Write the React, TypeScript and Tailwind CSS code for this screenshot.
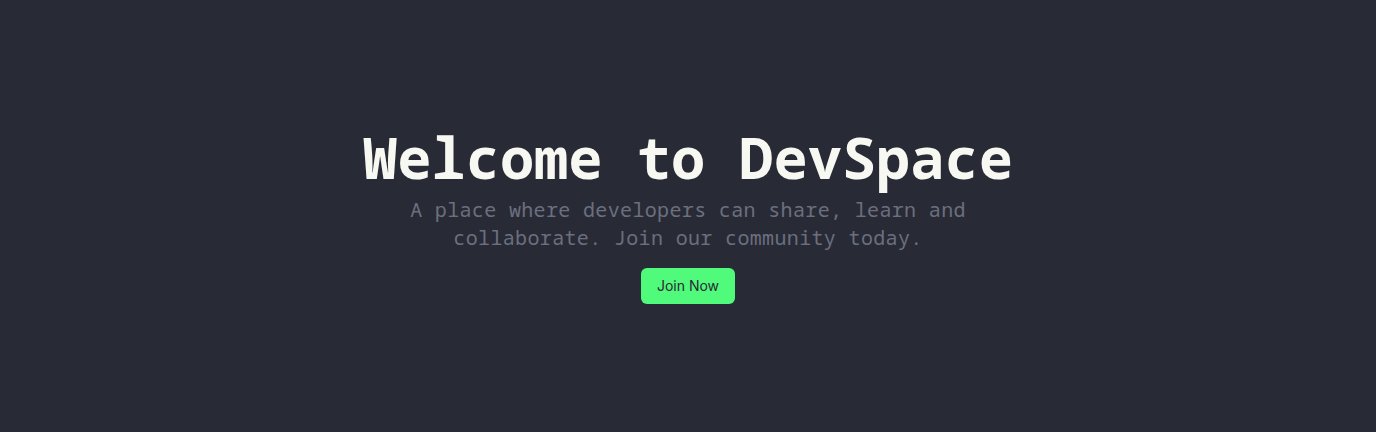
export default function App() {
    return (
        <main className="min-h-screen bg-[#282a36] flex items-center justify-center">
            <div className="flex flex-col items-center text-center">
                {/* Hero */}
                <h1 className="text-[57px] leading-none font-bold text-[#f8f8f2] font-['Noto_Sans_Mono',monospace]">
                    Welcome to DevSpace
                </h1>
                <p className="mt-[10px] max-w-xl text-xl tracking-[0.35px] text-[#6b6f7e] font-['Noto_Sans_Mono',monospace]">
                    A place where developers can share, learn and collaborate. Join our community today.
                </p>
                <button className="mt-4 px-4 py-2 rounded-md bg-[#50fa7b] text-sm text-[#282a36] font-['Inter',sans-serif]">
                    Join Now
                </button>
            </div>
        </main>
    );
}
